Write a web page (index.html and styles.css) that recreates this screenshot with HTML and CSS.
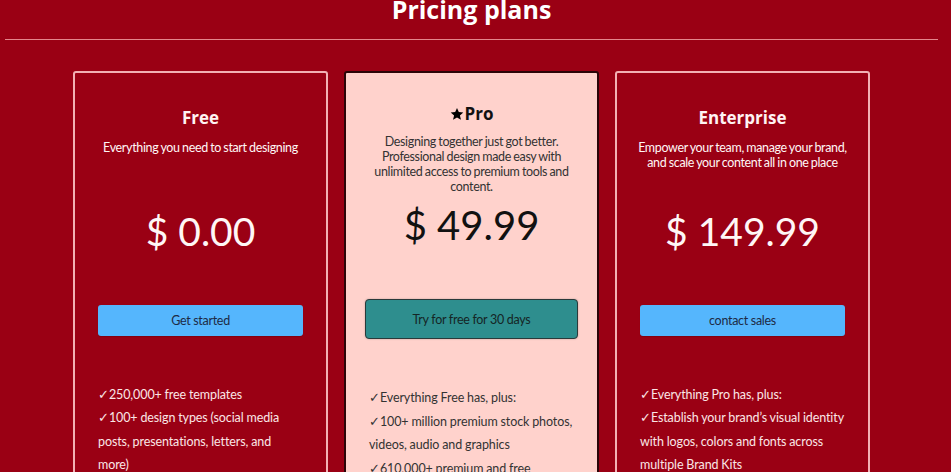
FILE: index.html
```html
<!DOCTYPE html>
<html lang="en">
<head>
<meta charset="utf-8">
<title>Pricing plans</title>
<link rel="stylesheet" href="styles.css">
</head>
<body>
<main class="page">
  <h1 class="page-title">Pricing plans</h1>
  <hr class="divider">
  <section class="plans">
    <article class="plan plan--red">
      <h2 class="plan-name">Free</h2>
      <p class="plan-desc">Everything you need to start designing</p>
      <div class="plan-price">$ 0.00</div>
      <button class="plan-btn plan-btn--blue">Get started</button>
      <ul class="features">
        <li><span class="check">✓</span>250,000+ free templates</li>
        <li><span class="check">✓</span>100+ design types (social media posts, presentations, letters, and more)</li>
        <li><span class="check">✓</span>Collaborate and comment in real-time</li>
        <li><span class="check">✓</span>5GB of cloud storage</li>
      </ul>
    </article>
    <article class="plan plan--pro">
      <h2 class="plan-name"><svg class="star" viewBox="0 0 24 24" aria-hidden="true"><path d="M12 1.5l3.1 7.1 7.7.7-5.8 5.1 1.8 7.6L12 18l-6.8 4 1.8-7.6-5.8-5.1 7.7-.7z"/></svg>Pro</h2>
      <p class="plan-desc">Designing together just got better. Professional design made easy with unlimited access to premium tools and content.</p>
      <div class="plan-price">$ 49.99</div>
      <button class="plan-btn plan-btn--teal">Try for free for 30 days</button>
      <ul class="features">
        <li><span class="check">✓</span>Everything Free has, plus:</li>
        <li><span class="check">✓</span>100+ million premium stock photos, videos, audio and graphics</li>
        <li><span class="check">✓</span>610,000+ premium and free templates</li>
        <li><span class="check">✓</span>1TB of cloud storage</li>
      </ul>
    </article>
    <article class="plan plan--red">
      <h2 class="plan-name">Enterprise</h2>
      <p class="plan-desc">Empower your team, manage your brand, and scale your content all in one place</p>
      <div class="plan-price">$ 149.99</div>
      <button class="plan-btn plan-btn--blue">contact sales</button>
      <ul class="features">
        <li><span class="check">✓</span>Everything Pro has, plus:</li>
        <li><span class="check">✓</span>Establish your brand’s visual identity with logos, colors and fonts across multiple Brand Kits</li>
        <li><span class="check">✓</span>Control your team’s access to apps and uploads</li>
      </ul>
    </article>
  </section>
</main>
</body>
</html>
```

FILE: styles.css
```css
* { box-sizing: border-box; }

html, body {
  margin: 0;
  padding: 0;
  background: #9a0014;
  overflow: hidden;
}

.page {
  width: 933px;
  margin-left: 5px;
  font-family: Lato, "Liberation Sans", sans-serif;
}

.page-title {
  margin: -3px 0 0;
  font-family: "Open Sans", "Liberation Sans", sans-serif;
  font-weight: 700;
  font-size: 25px;
  line-height: 24px;
  text-align: center;
  color: #ffffff;
}

.divider {
  margin: 18px 0 0;
  border: 0;
  height: 1px;
  background: #e4868c;
}

.plans {
  display: flex;
  justify-content: center;
  align-items: flex-start;
  gap: 16px;
  margin-top: 31px;
}

.plan {
  width: 255px;
  min-height: 460px;
  border-radius: 3px;
  padding: 35px 23px 0;
  display: flex;
  flex-direction: column;
  align-items: stretch;
}

.plan > * { flex-shrink: 0; }

.plan--red {
  border: 2px solid #f2b0b4;
  color: #fbe6e6;
}

.plan--pro {
  background: #ffd2cc;
  border: 2px solid #2b0508;
  color: #222;
  padding: 31px 19px 0;
}

.plan-name {
  margin: 0;
  font-family: "Open Sans", "Liberation Sans", sans-serif;
  font-weight: 700;
  font-size: 17px;
  line-height: 20px;
  text-align: center;
  color: #fff3f3;
}

.plan--pro .plan-name { color: #111; }

.star {
  width: 14px;
  height: 14px;
  fill: #000;
  vertical-align: -1px;
  margin-right: 1px;
}

.plan-desc {
  margin: 12px -4px 0;
  min-height: 68px;
  font-size: 12.5px;
  font-weight: 400;
  line-height: 15px;
  letter-spacing: -0.35px;
  word-spacing: -0.5px;
  text-align: center;
  color: #fff6f6;
}

.plan--pro .plan-desc {
  color: #333;
  margin: 10px -2px 0;
}

.plan-price {
  font-size: 39px;
  line-height: 46px;
  text-align: center;
  font-weight: 400;
  color: #fff6f6;
}

.plan--pro .plan-price {
  color: #111;
  font-weight: 400;
  font-size: 40px;
}

.plan-btn {
  margin-top: 51px;
  height: 31px;
  border-radius: 3px;
  font-family: Lato, "Liberation Sans", sans-serif;
  font-size: 12.5px;
  letter-spacing: -0.3px;
  color: #1d2a45;
  cursor: pointer;
}

.plan-btn--blue {
  background: #55b6fd;
  border: 0;
  box-shadow: 0 1px 1px rgba(0, 0, 0, 0.15);
}

.plan-btn--teal {
  background: #2e8e8e;
  border: 1px solid #2a3a3a;
  height: 40px;
  border-radius: 4px;
  color: #152525;
  box-shadow: 0 0 2px rgba(0, 0, 0, 0.25);
}

.features {
  list-style: none;
  margin: 47px 0 0;
  padding: 0;
  font-size: 12.5px;
  line-height: 23.4px;
  letter-spacing: -0.1px;
  word-spacing: -0.2px;
  font-weight: 400;
}

.check {
  font-family: "DejaVu Sans", sans-serif;
  font-size: 13px;
  line-height: 1;
  letter-spacing: 0;
}

.plan--pro .features {
  padding-left: 4px;
  margin-top: 47px;
  color: #333;
  line-height: 23.6px;
}
```
